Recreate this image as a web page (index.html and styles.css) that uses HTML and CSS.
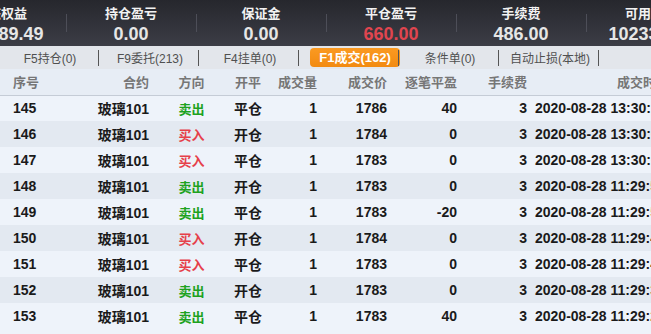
FILE: index.html
```html
<!DOCTYPE html>
<html>
	<head>
		<meta charset="utf-8">
		<link rel="stylesheet" href="styles.css">
	</head>
	<body>
		<div class="summary">
			<div class="sum-item"><div class="sum-label">动态权益</div><div class="sum-value">102389.49</div></div>
			<div class="sum-item"><div class="sum-label">持仓盈亏</div><div class="sum-value">0.00</div></div>
			<div class="sum-item"><div class="sum-label">保证金</div><div class="sum-value">0.00</div></div>
			<div class="sum-item"><div class="sum-label">平仓盈亏</div><div class="sum-value loss">660.00</div></div>
			<div class="sum-item"><div class="sum-label">手续费</div><div class="sum-value">486.00</div></div>
			<div class="sum-item"><div class="sum-label">可用资金</div><div class="sum-value">102338.49</div></div>
		</div>
		<div class="tabbar">
			<div class="tab">F5持仓(0)</div>
			<div class="tab">F9委托(213)</div>
			<div class="tab">F4挂单(0)</div>
			<div class="tab"><span class="tab-active">F1成交(162)</span></div>
			<div class="tab">条件单(0)</div>
			<div class="tab">自动止损(本地)</div>
		</div>
		<table class="trades">
			<colgroup>
				<col style="width:90px">
				<col style="width:65px">
				<col style="width:73px">
				<col style="width:40px">
				<col style="width:55px">
				<col style="width:70px">
				<col style="width:70px">
				<col style="width:70px">
				<col style="width:220px">
			</colgroup>
			<thead>
				<tr>
					<th class="left">序号</th>
					<th class="right">合约</th>
					<th>方向</th>
					<th>开平</th>
					<th class="right">成交量</th>
					<th class="right">成交价</th>
					<th class="right">逐笔平盈</th>
					<th class="right">手续费</th>
					<th>成交时间</th>
				</tr>
			</thead>
			<tbody>
				<tr><td class="left">145</td><td class="right">玻璃101</td><td class="sell">卖出</td><td>平仓</td><td class="right">1</td><td class="right">1786</td><td class="right">40</td><td class="right">3</td><td class="time">2020-08-28 13:30:12</td></tr>
				<tr><td class="left">146</td><td class="right">玻璃101</td><td class="buy">买入</td><td>开仓</td><td class="right">1</td><td class="right">1784</td><td class="right">0</td><td class="right">3</td><td class="time">2020-08-28 13:30:05</td></tr>
				<tr><td class="left">147</td><td class="right">玻璃101</td><td class="buy">买入</td><td>平仓</td><td class="right">1</td><td class="right">1783</td><td class="right">0</td><td class="right">3</td><td class="time">2020-08-28 13:30:01</td></tr>
				<tr><td class="left">148</td><td class="right">玻璃101</td><td class="sell">卖出</td><td>开仓</td><td class="right">1</td><td class="right">1783</td><td class="right">0</td><td class="right">3</td><td class="time">2020-08-28 11:29:58</td></tr>
				<tr><td class="left">149</td><td class="right">玻璃101</td><td class="sell">卖出</td><td>平仓</td><td class="right">1</td><td class="right">1783</td><td class="right">-20</td><td class="right">3</td><td class="time">2020-08-28 11:29:51</td></tr>
				<tr><td class="left">150</td><td class="right">玻璃101</td><td class="buy">买入</td><td>开仓</td><td class="right">1</td><td class="right">1784</td><td class="right">0</td><td class="right">3</td><td class="time">2020-08-28 11:29:44</td></tr>
				<tr><td class="left">151</td><td class="right">玻璃101</td><td class="buy">买入</td><td>平仓</td><td class="right">1</td><td class="right">1783</td><td class="right">0</td><td class="right">3</td><td class="time">2020-08-28 11:29:40</td></tr>
				<tr><td class="left">152</td><td class="right">玻璃101</td><td class="sell">卖出</td><td>开仓</td><td class="right">1</td><td class="right">1783</td><td class="right">0</td><td class="right">3</td><td class="time">2020-08-28 11:29:33</td></tr>
				<tr><td class="left">153</td><td class="right">玻璃101</td><td class="sell">卖出</td><td>平仓</td><td class="right">1</td><td class="right">1783</td><td class="right">40</td><td class="right">3</td><td class="time">2020-08-28 11:29:27</td></tr>
			</tbody>
		</table>
	</body>
</html>
```

FILE: styles.css
```css
* {
	margin:0;
	padding:0;
	box-sizing: border-box;
}
body {
	width:651px;
	height:334px;
	overflow:hidden;
	background-color: #eef3fa;
	font-family: "Liberation Sans", "Noto Sans CJK SC", sans-serif;
}
.summary {
	display:flex;
	height:46px;
	margin-left:-64px;
	background: linear-gradient(#26272d, #3c3d46);
}
.summary .sum-item {
	flex:none;
	width:130px;
	display:flex;
	flex-direction: column;
	align-items: center;
	position: relative;
}
.summary .sum-item + .sum-item::before {
	content:"";
	position:absolute;
	left:0;
	top:14px;
	height:18px;
	border-left:1px solid #4d4e58;
}
.sum-label {
	margin-top:4px;
	height:19px;
	font-size:13px;
	font-weight:bold;
	color:#f2f2f2;
	line-height:19px;
}
.sum-value {
	font-size:18px;
	font-weight:bold;
	color:#e6e6e6;
	line-height:22px;
}
.sum-value.loss {
	color:#e0454f;
}
.tabbar {
	display:flex;
	height:23px;
	background-color: #e3e6eb;
}
.tabbar .tab {
	flex:none;
	width:100px;
	display:flex;
	align-items:center;
	justify-content:center;
	font-size:12px;
	color:#505050;
	position:relative;
}
.tabbar .tab::after {
	content:"";
	position:absolute;
	right:1px;
	top:4px;
	height:16px;
	border-left:1px solid #555;
}
.tab-active {
	display:block;
	width:92px;
	margin-left:10px;
	height:19px;
	line-height:19px;
	text-align:center;
	border-radius:4px;
	background: linear-gradient(#fb9a22, #f28a10);
	color:#fff;
	font-weight:bold;
	font-size:13px;
}
.trades {
	table-layout:fixed;
	border-collapse:collapse;
	width:753px;
}
.trades th {
	height:26px;
	background-color:#e7edf5;
	border-bottom:1px solid #c5ccd6;
	font-size:13px;
	font-weight:bold;
	color:#767676;
	text-align:center;
	white-space:nowrap;
}
.trades td {
	height:26px;
	font-size:14px;
	font-weight:bold;
	color:#1a1a1a;
	text-align:center;
	white-space:nowrap;
}
.trades tbody tr:nth-child(even) td {
	background-color:#e3e9f1;
}
.trades .left {
	text-align:left;
	padding-left:13px;
}
.trades .right {
	text-align:right;
	padding-right:6px;
}
.trades td.time {
	text-align:left;
	padding-left:2px;
}
.trades td.sell {
	color:#1ea21e;
	font-size:13px;
}
.trades td.buy {
	color:#e6404a;
	font-size:13px;
}
```
